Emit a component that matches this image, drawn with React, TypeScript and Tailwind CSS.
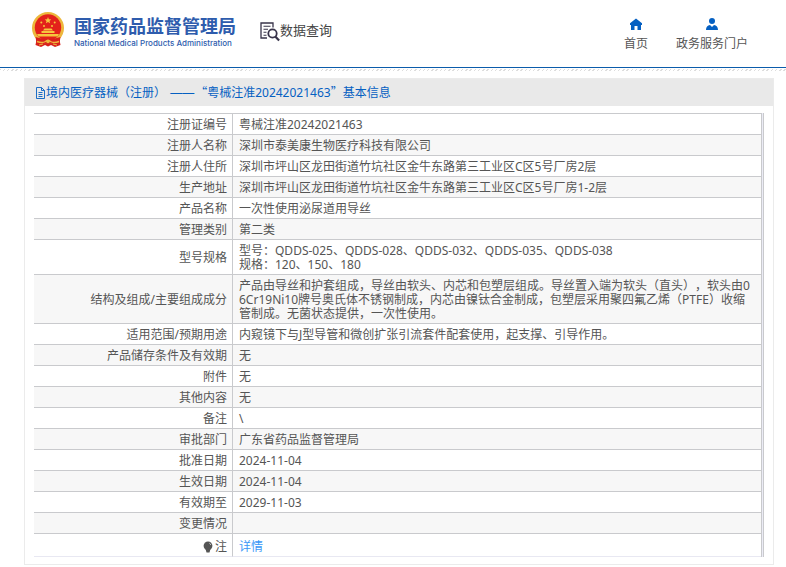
import React from 'react';

const rows = [
  { label: '注册证编号', value: '粤械注准20242021463' },
  { label: '注册人名称', value: '深圳市泰美康生物医疗科技有限公司' },
  { label: '注册人住所', value: '深圳市坪山区龙田街道竹坑社区金牛东路第三工业区C区5号厂房2层' },
  { label: '生产地址', value: '深圳市坪山区龙田街道竹坑社区金牛东路第三工业区C区5号厂房1-2层' },
  { label: '产品名称', value: '一次性使用泌尿道用导丝' },
  { label: '管理类别', value: '第二类' },
  {
    label: '型号规格',
    value: '型号：QDDS-025、QDDS-028、QDDS-032、QDDS-035、QDDS-038\n规格：120、150、180',
  },
  {
    label: '结构及组成/主要组成成分',
    value:
      '产品由导丝和护套组成，导丝由软头、内芯和包塑层组成。导丝置入端为软头（直头），软头由06Cr19Ni10牌号奥氏体不锈钢制成，内芯由镍钛合金制成，包塑层采用聚四氟乙烯（PTFE）收缩管制成。无菌状态提供，一次性使用。',
  },
  { label: '适用范围/预期用途', value: '内窥镜下与J型导管和微创扩张引流套件配套使用，起支撑、引导作用。' },
  { label: '产品储存条件及有效期', value: '无' },
  { label: '附件', value: '无' },
  { label: '其他内容', value: '无' },
  { label: '备注', value: '\\' },
  { label: '审批部门', value: '广东省药品监督管理局' },
  { label: '批准日期', value: '2024-11-04' },
  { label: '生效日期', value: '2024-11-04' },
  { label: '有效期至', value: '2029-11-03' },
  { label: '变更情况', value: '' },
];

function Emblem() {
  return (
    <svg viewBox="0 0 32 35" className="h-[35px] w-8 shrink-0" aria-hidden="true">
      <path d="M5 25 L27 25 L28.5 33 L23 35 L19 33 L16 34.5 L13 33 L9 35 L3.5 33Z" fill="#d8201c" />
      <circle cx="16" cy="16" r="16" fill="#edb73c" />
      <circle cx="16" cy="15.5" r="13.2" fill="#e3211b" />
      <path d="M16 5l.9 2.2 2.4.2-1.8 1.5.6 2.3-2.1-1.3-2.1 1.3.6-2.3-1.8-1.5 2.4-.2z" fill="#f6c53d" />
      <g fill="#f6c53d">
        <circle cx="9.3" cy="10.5" r="1" />
        <circle cx="22.7" cy="10.5" r="1" />
        <circle cx="12" cy="14" r="1" />
        <circle cx="20" cy="14" r="1" />
        <path d="M11 18.5l1.5-2h7l1.5 2z" />
        <path d="M9.5 19h13v2h-13z" />
        <path d="M5 22h22l-1.5 2.5h-19z" />
      </g>
      <path d="M3.5 25 Q9 27 16 27 Q23 27 28.5 25 L27.5 31 Q21 32 16 32 Q11 32 4.5 31Z" fill="#d8201c" />
      <path d="M5 29.5 Q10 31.5 13.5 29.5 Q16 27 18.5 29.5 Q22 31.5 27 29.5" fill="none" stroke="#edb73c" strokeWidth="1.4" />
      <circle cx="16" cy="29.5" r="1.8" fill="#edb73c" />
      <path d="M7 33l4-1M25 33l-4-1" stroke="#edb73c" strokeWidth="1" />
    </svg>
  );
}

function SearchDocIcon() {
  return (
    <svg viewBox="0 0 20 20" className="h-5 w-5 shrink-0" fill="none" stroke="#38344a" aria-hidden="true">
      <path d="M13 5.5V1H1v15h6" strokeWidth="1.3" />
      <path d="M3.5 4.2h7M3.5 7.2h4.5M3.5 10.2h3M3.5 13.2h3" strokeWidth="1.1" />
      <circle cx="12.5" cy="11.5" r="4.2" strokeWidth="1.8" />
      <path d="M15.5 14.8l3.6 3.8" strokeWidth="2.2" />
    </svg>
  );
}

function HomeIcon() {
  return (
    <svg viewBox="0 0 12 12" className="h-3 w-3" fill="#0560c2" aria-hidden="true">
      <path d="M6 .5L0 5.3V7h1v5h3.5V8h3v4H11V7h1V5.3z" />
    </svg>
  );
}

function UserIcon() {
  return (
    <svg viewBox="0 0 12 12" className="h-3 w-3" fill="#0560c2" aria-hidden="true">
      <circle cx="6" cy="3.1" r="3" />
      <path d="M0 12c0-3 1.5-4.8 4-5l2 2 2-2c2.5.2 4 2 4 5z" />
    </svg>
  );
}

function FileIcon() {
  return (
    <svg viewBox="0 0 11 12" className="h-3 w-[11px] shrink-0" fill="none" stroke="#0560c2" strokeWidth=".9" aria-hidden="true">
      <path d="M1.5.5h5l3 3v8h-8zM6.5.5v3h3M3.5 5.5h4M3.5 7.5h4M3.5 9.5h4" />
    </svg>
  );
}

function NoteIcon() {
  return (
    <svg viewBox="0 0 10 12" className="h-3 w-[10px]" aria-hidden="true">
      <circle cx="5" cy="4.8" r="4.4" fill="#555" />
      <path d="M2.5 8h5L6.5 11.5h-3z" fill="#555" />
      <path d="M6.3 2.2q1.2.5 1.4 1.8" fill="none" stroke="#ddd" strokeWidth=".8" />
    </svg>
  );
}

export default function App() {
  return (
    <div className="bg-white font-['Noto_Sans','Noto_Sans_CJK_SC',sans-serif] text-xs text-[#555] [text-spacing-trim:space-all]">
      <header className="flex h-[68px] items-start justify-between border-b border-[#0b5cab] pl-8 pr-[38px]">
        <div className="flex">
          <a href="#" className="flex pt-3">
            <Emblem />
            <div className="ml-[10px] pt-[3px] text-[#2e5cad]">
              <div className="whitespace-nowrap font-['Noto_Sans_CJK_SC',sans-serif] text-[18px] font-bold leading-5">国家药品监督管理局</div>
              <div className="whitespace-nowrap font-[Inter,sans-serif] text-[8px] font-medium leading-4">
                National Medical Products Administration
              </div>
            </div>
          </a>
          <a href="#" className="ml-6 flex items-start pt-[22px] text-[#444]">
            <SearchDocIcon />
            <span className="whitespace-nowrap font-['Noto_Sans_CJK_SC',sans-serif] text-[13px] leading-4">数据查询</span>
          </a>
        </div>
        <nav className="flex gap-7 pt-[18px]">
          <a href="#" className="flex flex-col items-center gap-1">
            <HomeIcon />
            <span className="leading-5">首页</span>
          </a>
          <a href="#" className="flex flex-col items-center gap-1">
            <UserIcon />
            <span className="leading-5">政务服务门户</span>
          </a>
        </nav>
      </header>
      <div className="mt-px h-[2px] bg-[repeating-linear-gradient(135deg,#ddd_0px,#ddd_1px,#fff_1px,#fff_3px)]" />

      <main className="mb-[2px] ml-6 mr-3 mt-[7px] border border-[#ebebeb]">
        <h1 className="flex h-[27px] items-center bg-[#e9e9e9] pl-[10px] text-[#0560c2]">
          <FileIcon />
          <span className="whitespace-pre">
            境内医疗器械（注册）{' '}
            <span className="mx-px font-['Liberation_Sans',sans-serif]">——</span>
            <span className="font-['Noto_Sans_CJK_SC',sans-serif]">“</span>粤械注准20242021463
            <span className="font-['Noto_Sans_CJK_SC',sans-serif]">”</span>基本信息
          </span>
        </h1>
        <div className="px-[9px] pb-[7px] pt-[7px]">
          <div className="border-r border-[#c9cacd] bg-[#ebebf5] pr-px">
            <table className="w-full table-fixed border-separate border-spacing-0 border-r border-t border-[#c9cacd] bg-white leading-[14px]">
              <colgroup>
                <col className="w-[199px]" />
                <col />
              </colgroup>
              <tbody>
                {rows.map((row) => (
                  <tr key={row.label} className="even:bg-[#f7f7f7]">
                    <th scope="row" className="border-b border-r border-[#c9cacd] pb-[2px] pr-[5px] pt-1 text-right font-normal">
                      {row.label}
                    </th>
                    <td className="h-[21px] whitespace-pre-line break-all border-b border-[#c9cacd] pb-[2px] pl-[6px] pr-[10px] pt-1">
                      {row.value}
                    </td>
                  </tr>
                ))}
                <tr>
                  <th scope="row" className="border-b border-r border-b-[#e8e8f2] border-r-[#c9cacd] pb-[2px] pr-[5px] pt-[6px] font-normal">
                    <div className="flex items-center justify-end gap-[2px]">
                      <NoteIcon />
                      <span>注</span>
                    </div>
                  </th>
                  <td className="h-[23px] border-b border-[#e8e8f2] pb-[2px] pl-[6px] pt-[6px]">
                    <a href="#" className="text-[#3b97f7]">详情</a>
                  </td>
                </tr>
              </tbody>
            </table>
          </div>
        </div>
      </main>
    </div>
  );
}
